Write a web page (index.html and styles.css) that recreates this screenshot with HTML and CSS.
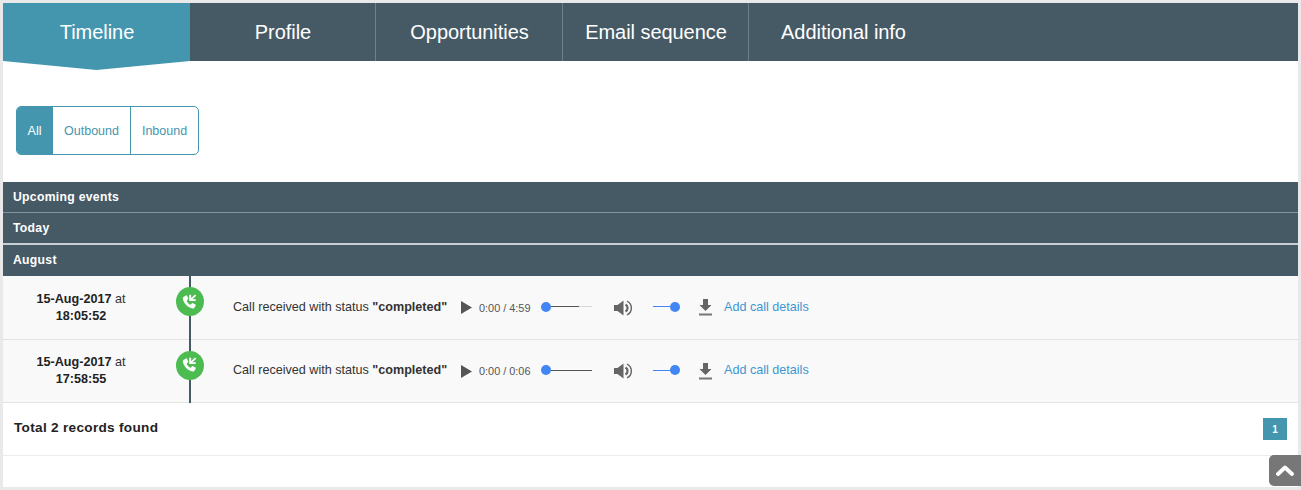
FILE: index.html
```html
<!DOCTYPE html>
<html lang="en">
<head>
<meta charset="utf-8">
<title>Timeline</title>
<link rel="stylesheet" href="styles.css">
</head>
<body>
<main class="panel">
  <nav class="tabs">
    <a class="tab tab-active">Timeline</a>
    <a class="tab">Profile</a>
    <a class="tab tab-wide">Opportunities</a>
    <a class="tab">Email sequence</a>
    <a class="tab tab-last">Additional info</a>
  </nav>
  <div class="filters">
    <div class="filter-group">
      <a class="filter filter-all">All</a>
      <a class="filter filter-out">Outbound</a>
      <a class="filter filter-in">Inbound</a>
    </div>
  </div>
  <div class="bar bar-first">Upcoming events</div>
  <div class="bar bar-second">Today</div>
  <div class="bar bar-third">August</div>
  <section class="rows">
    <div class="row row-one">
      <div class="date"><b>15-Aug-2017</b> at<br><b>18:05:52</b></div>
      <div class="node">
        <span class="node-dot">
          <svg viewBox="0 0 16 16" width="18" height="18"><path fill="#fff" d="M2.2 3.6 4.4 2.2c.4-.2.7-.1.9.3l1.100 2.200c.2.4.1.7-.2 1L5 6.600c.5 1.700 1.900 3.200 3.600 3.900l1-1.200c.3-.3.600-.4 1-.2l2.200 1.200c.4.200.5.500.3.900l-1.300 2.100c-.3.400-.7.600-1.200.500C5.800 12.900 2.500 9.400 1.600 4.800c-.1-.5.200-.9.600-1.200Z"/><path fill="#fff" d="M7.300 1.500h1.700v2.900l3.500-3.100 1.100 1.200-3.400 3h2.900v1.700H7.300Z"/></svg>
        </span>
      </div>
      <div class="message">Call received with status <b>"completed"</b></div>
      <div class="player">
        <svg class="play" viewBox="0 0 11 13" width="11" height="13"><path fill="#555" d="M0 0l11 6.500L0 13Z"/></svg>
        <span class="time">0:00 / 4:59</span>
        <div class="seek"><span class="knob"></span><span class="track-played track-short"></span><span class="track-rest"></span></div>
        <svg class="volume" viewBox="0 0 18 16" width="18" height="16"><path fill="#666" d="M0 5h3.500L9.500 .5v15L3.500 11H0Z"/><path fill="none" stroke="#666" stroke-width="2.200" d="M11.500 4.500a4 4 0 0 1 0 7"/><path fill="none" stroke="#666" stroke-width="1.400" d="M13 1.200a7.500 7.500 0 0 1 0 13.600"/></svg>
        <div class="vol"><span class="vol-line"></span><span class="knob"></span></div>
        <svg class="download" viewBox="0 0 13 17" width="13" height="17"><path fill="#666" d="M4 0h5v6h3.500L6.500 12 .5 6H4Z"/><rect x="0" y="14.500" width="13" height="2" fill="#777"/></svg>
        <a class="details">Add call details</a>
      </div>
    </div>
    <div class="row row-two">
      <div class="date"><b>15-Aug-2017</b> at<br><b>17:58:55</b></div>
      <div class="node">
        <span class="node-dot">
          <svg viewBox="0 0 16 16" width="18" height="18"><path fill="#fff" d="M2.2 3.6 4.4 2.2c.4-.2.7-.1.9.3l1.100 2.200c.2.4.1.7-.2 1L5 6.600c.5 1.700 1.900 3.200 3.600 3.900l1-1.200c.3-.3.600-.4 1-.2l2.200 1.200c.4.200.5.500.3.900l-1.300 2.100c-.3.400-.7.600-1.200.500C5.800 12.900 2.500 9.400 1.600 4.800c-.1-.5.200-.9.600-1.200Z"/><path fill="#fff" d="M7.300 1.500h1.700v2.900l3.500-3.100 1.100 1.200-3.400 3h2.900v1.700H7.300Z"/></svg>
        </span>
      </div>
      <div class="message">Call received with status <b>"completed"</b></div>
      <div class="player">
        <svg class="play" viewBox="0 0 11 13" width="11" height="13"><path fill="#555" d="M0 0l11 6.500L0 13Z"/></svg>
        <span class="time">0:00 / 0:06</span>
        <div class="seek"><span class="knob"></span><span class="track-played"></span></div>
        <svg class="volume" viewBox="0 0 18 16" width="18" height="16"><path fill="#666" d="M0 5h3.500L9.500 .5v15L3.500 11H0Z"/><path fill="none" stroke="#666" stroke-width="2.200" d="M11.500 4.500a4 4 0 0 1 0 7"/><path fill="none" stroke="#666" stroke-width="1.400" d="M13 1.200a7.500 7.500 0 0 1 0 13.600"/></svg>
        <div class="vol"><span class="vol-line"></span><span class="knob"></span></div>
        <svg class="download" viewBox="0 0 13 17" width="13" height="17"><path fill="#666" d="M4 0h5v6h3.500L6.500 12 .5 6H4Z"/><rect x="0" y="14.500" width="13" height="2" fill="#777"/></svg>
        <a class="details">Add call details</a>
      </div>
    </div>
  </section>
  <footer class="foot">
    <strong class="total">Total 2 records found</strong>
    <span class="page">1</span>
  </footer>
</main>
<a class="to-top" aria-label="Back to top">
  <svg viewBox="0 0 18 11" width="18" height="11"><path fill="none" stroke="#fff" stroke-width="3.800" stroke-linecap="round" stroke-linejoin="round" d="M2 9l7-6.500L16 9"/></svg>
</a>
</body>
</html>
```

FILE: styles.css
```css
* { box-sizing: border-box; }
html, body { height: 100%; }
body {
  margin: 0;
  padding: 3px;
  background: #e9e9e9;
  font-family: "Liberation Sans", Arial, sans-serif;
  color: #333;
  overflow: hidden;
}
.panel {
  height: 484px;
  background: #fff;
  display: flex;
  flex-direction: column;
}
.tabs {
  display: flex;
  height: 58px;
  background: #465a66;
  flex: none;
}
.tab {
  width: 186px;
  height: 58px;
  display: flex;
  align-items: center;
  justify-content: center;
  color: #fff;
  font-size: 20px;
  letter-spacing: -.05px;
  border-right: 1px solid #6d7f8a;
  position: relative;
  padding: 1px 0 0 1px;
}
.tab-wide { width: 187px; }
.tab-active {
  width: 187px;
  background: #4496ae;
  border-right: 0;
}
.tab-active::after {
  content: "";
  position: absolute;
  left: 0;
  right: 0;
  top: 58px;
  height: 9px;
  background: #4496ae;
  clip-path: polygon(0 0, 100% 0, 50% 100%);
}
.tab-last { border-right: 0; width: 188px; }
.filters {
  height: 121px;
  flex: none;
  padding: 45px 0 0 13px;
}
.filter-group {
  display: inline-flex;
  height: 49px;
  border: 1px solid #4496ae;
  border-radius: 5px;
  overflow: hidden;
  font-size: 12.500px;
  color: #4496ae;
}
.filter {
  display: flex;
  align-items: center;
  justify-content: center;
}
.filter-all { width: 37px; margin-left: -1px; background: #4496ae; color: #fff; }
.filter-out { width: 78px; border-right: 1px solid #4496ae; }
.filter-in { width: 67px; }
.bar {
  background: #465a66;
  color: #fff;
  font-size: 12.200px;
  font-weight: bold;
  letter-spacing: .3px;
  padding-left: 10px;
  display: flex;
  align-items: center;
  flex: none;
}
.bar-first { height: 31px; border-bottom: 1px solid #84939c; }
.bar-second { height: 32px; border-bottom: 2px solid #c9d0d4; }
.bar-third { height: 31px; padding-bottom: 2px; }
.rows { position: relative; flex: none; }
.row {
  background: #f9f9f9;
  border-bottom: 1px solid #e3e3e3;
  display: flex;
  align-items: center;
  font-size: 12.600px;
  color: #333;
}
.row-one { height: 64px; }
.row-two { height: 63px; }
.date {
  width: 156px;
  flex: none;
  text-align: center;
  line-height: 17px;
  color: #333;
}
.date b { color: #222; }
.node {
  width: 62px;
  height: 100%;
  flex: none;
  position: relative;
  display: flex;
  align-items: center;
  justify-content: center;
}
.node::before {
  content: "";
  position: absolute;
  left: 30px;
  top: 0;
  bottom: -1px;
  width: 2px;
  background: #465a66;
}
.node-dot {
  position: relative;
  width: 28px;
  height: 29px;
  border-radius: 50%;
  background: #4cbc50;
  display: flex;
  align-items: center;
  justify-content: center;
  margin-bottom: 12px;
}
.message {
  width: 240px;
  flex: none;
  padding-left: 12px;
  margin-bottom: 2px;
  white-space: nowrap;
}
.message b { color: #333; }
.player {
  display: flex;
  align-items: center;
  color: #555;
}
.play { flex: none; }
.time {
  width: 62px;
  margin-left: 7px;
  font-size: 10.900px;
  white-space: nowrap;
  flex: none;
}
.seek {
  width: 51px;
  height: 11px;
  margin-bottom: 2px;
  flex: none;
  display: flex;
  align-items: center;
}
.knob {
  width: 10px;
  height: 10px;
  border-radius: 50%;
  background: #4285f4;
  flex: none;
}
.track-played { flex: 1; height: 1px; background: #555; }
.track-short { flex: none; width: 28px; }
.track-rest { flex: 1; height: 1px; background: #d8d8d8; }
.volume { margin-left: 22px; flex: none; }
.vol {
  width: 27px;
  margin-left: 21px;
  margin-bottom: 2px;
  flex: none;
  display: flex;
  align-items: center;
}
.vol-line { flex: 1; height: 1px; background: #4285f4; }
.download { margin-left: 19px; flex: none; }
.details {
  margin-left: 12px;
  margin-bottom: 2px;
  font-size: 12.600px;
  color: #3c97d3;
  white-space: nowrap;
}
.foot {
  height: 53px;
  flex: none;
  border-bottom: 1px solid #ececec;
  display: flex;
  align-items: center;
  justify-content: space-between;
  padding: 0 11px;
}
.total {
  font-size: 13.600px;
  letter-spacing: .3px;
  color: #222;
  margin-bottom: 4px;
}
.page {
  width: 24px;
  height: 22px;
  background: #4496ae;
  color: #fff;
  font-size: 10px;
  font-weight: bold;
  display: flex;
  align-items: center;
  justify-content: center;
}
.to-top {
  position: fixed;
  left: 1269px;
  top: 455px;
  width: 32px;
  height: 31px;
  background: #777;
  border-radius: 5px 0 0 5px;
  display: flex;
  align-items: center;
  justify-content: center;
}
```
